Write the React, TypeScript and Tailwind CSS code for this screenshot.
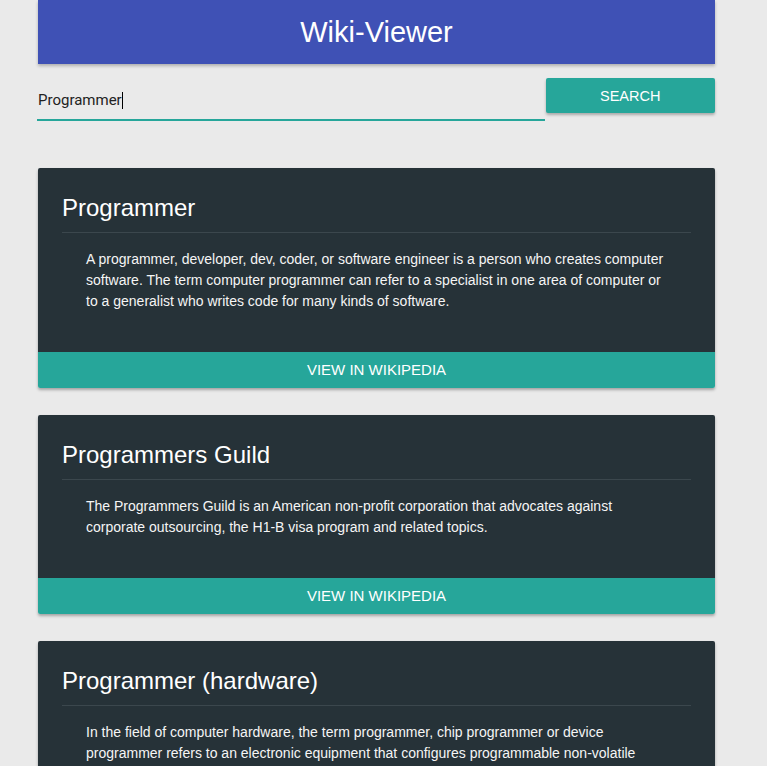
import React from "react";

const results = [
  {
    title: "Programmer",
    text: "A programmer, developer, dev, coder, or software engineer is a person who creates computer software. The term computer programmer can refer to a specialist in one area of computer or to a generalist who writes code for many kinds of software.",
  },
  {
    title: "Programmers Guild",
    text: "The Programmers Guild is an American non-profit corporation that advocates against corporate outsourcing, the H1-B visa program and related topics.",
  },
  {
    title: "Programmer (hardware)",
    text: "In the field of computer hardware, the term programmer, chip programmer or device programmer refers to an electronic equipment that configures programmable non-volatile circuits, such as EPROMs, EEPROMs, Flashs, eMMC, MRAM, FeRAM, NVRAM, PLDs, PLAs, PALs, GALs, CPLDs, FPGAs or microcontrollers.",
  },
];

export default function App() {
  return (
    <div
      className="min-h-[766px] w-full bg-[#eaeaea] overflow-hidden"
      style={{ fontFamily: '"Liberation Sans", Arial, sans-serif' }}
    >
      <div className="ml-[38px] w-[677px]">
        <header className="h-[64px] bg-[#3f51b5] flex items-center justify-center shadow-[0_2px_3px_rgba(0,0,0,0.25)]">
          <h1 className="text-white text-[29px] leading-none">Wiki-Viewer</h1>
        </header>

        <div className="mt-[14px] flex items-start">
          <div className="ml-[-1px] w-[509px] h-[43px] border-b-2 border-[#26a69a] flex items-center">
            <span
              className="pl-[1px] text-[15px] text-[#222] mt-[3px]"
              style={{ fontFamily: 'Roboto, "Liberation Sans", sans-serif' }}
            >
              Programmer
            </span>
            <span className="inline-block w-[1px] h-[17px] bg-black mt-[3px]" />
          </div>
          <button className="ml-[1px] w-[170px] h-[35px] bg-[#26a69a] rounded-[2px] text-white text-[14.5px] shadow-[0_2px_3px_rgba(0,0,0,0.28)] flex items-center justify-center pt-[2px]">
            SEARCH
          </button>
        </div>

        <div className="mt-[47px] flex flex-col gap-[27px]">
          {results.map((r) => (
            <div
              key={r.title}
              className="rounded-[2px] overflow-hidden shadow-[0_2px_3px_rgba(0,0,0,0.3)]"
            >
              <div className="bg-[#263238] px-[24px] pt-[24px] pb-[24px]">
                <h2 className="text-white text-[24px] leading-[32px]">{r.title}</h2>
                <div className="mt-[8px] h-[1px] bg-[#3b474d]" />
                <p className="mt-[16px] mb-[16px] mx-[24px] text-[#f5f5f5] text-[14px] leading-[21px]">
                  {r.text}
                </p>
              </div>
              <div className="h-[36px] bg-[#26a69a] flex items-center justify-center text-white text-[15px]">
                VIEW IN WIKIPEDIA
              </div>
            </div>
          ))}
        </div>
      </div>
    </div>
  );
}
